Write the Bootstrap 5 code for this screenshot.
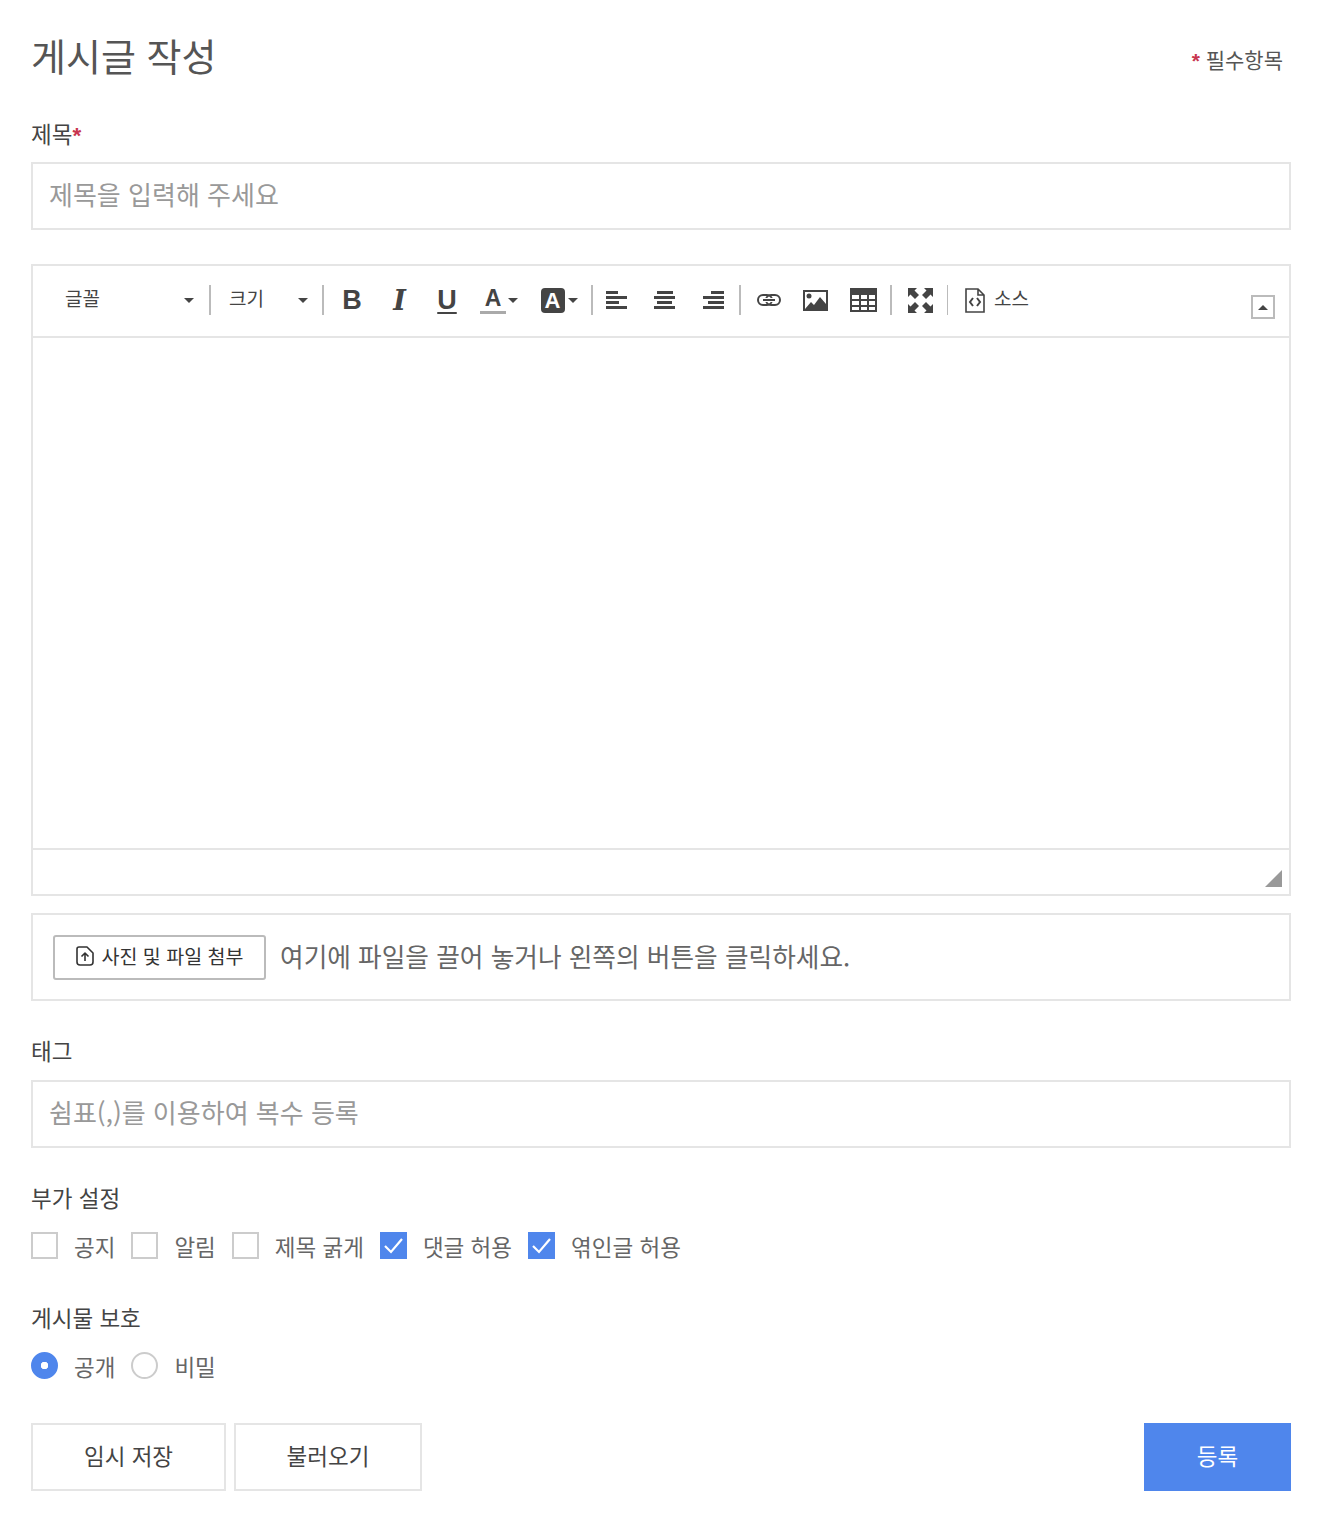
<!DOCTYPE html>
<html lang="ko">
<head>
<meta charset="utf-8">
<title>게시글 작성</title>
<link rel="stylesheet" href="https://cdn.jsdelivr.net/npm/bootstrap@5.3.0/dist/css/bootstrap.min.css">
<style>
body{font-family:"Noto Sans CJK KR","Liberation Sans",sans-serif;color:#555;background:#fff;}
.wb-page{padding:30px 35px 23px 31px;}
.wb-head{height:52px;}
.wb-title{font-size:38px;line-height:52px;font-weight:400;color:#555;margin:0 0 2px;}
.wb-req{font-size:21px;line-height:24px;color:#555;margin-right:8px;margin-top:5px;}
.wb-star{color:#c8364f;font-family:"Liberation Sans",sans-serif;font-weight:700;line-height:1;}
.wb-label{display:block;font-size:22.500px;line-height:32px;color:#444;margin:0 0 12px;}
.wb-label-first{margin-top:36px;line-height:30px;margin-bottom:14px;}
.wb-input.form-control{height:68px;border:2px solid #e5e5e5;border-radius:0;font-size:26px;padding:0 16px 5px;color:#555;box-shadow:none;}
.wb-input.form-control::placeholder{color:#999;}
.wb-editor{border:2px solid #e5e5e5;margin-top:34px;}
.wb-tools{height:72px;border-bottom:2px solid #e5e5e5;padding-top:19px;}
.wb-tool{height:30px;width:48px;flex:none;display:flex;align-items:center;justify-content:center;color:#444;}
.wb-tool svg{display:block;fill:#444;}
.wb-w46{width:46px;}
.wb-w47{width:47px;}
.wb-w49{width:49px;}
.wb-w50{width:50px;}
.wb-w54{width:54px;}
.wb-w56{width:56px;}
.wb-w64{width:64px;}
.wb-ml1{margin-left:1px;}
.wb-ml2{margin-left:2px;}
.wb-ml4{margin-left:4px;}
.wb-sep{flex:none;width:2px;height:30px;background:#bbb;}
.wb-sep-thin{width:1px;}
.wb-select{height:30px;flex:none;display:flex;align-items:center;font-size:19px;color:#444;padding-bottom:4px;}
.wb-select-a{width:176px;padding-left:32px;}
.wb-select-b{width:111px;padding-left:18px;}
.wb-caret{width:0;height:0;border-left:5px solid transparent;border-right:5px solid transparent;border-top:5px solid #444;flex:none;}
.wb-select .wb-caret{margin-top:4px;}
.wb-select-a .wb-caret{margin-left:auto;margin-right:15px;}
.wb-select-b .wb-caret{margin-left:auto;margin-right:14px;}
.wb-b,.wb-u{font-family:"Liberation Sans",sans-serif;font-weight:700;font-size:27px;line-height:1;}
.wb-i{font-family:"DejaVu Serif",serif;font-weight:700;font-style:italic;font-size:27px;line-height:1;}
.wb-u{text-decoration:underline;text-decoration-thickness:2px;text-underline-offset:3px;}
.wb-a{display:block;font-family:"Liberation Sans",sans-serif;font-weight:700;font-size:23px;border-bottom:3px solid #aaa;line-height:23px;height:27px;padding:0 5px;margin-right:2px;}
.wb-abox{width:24px;height:25px;background:#444;color:#fff;border-radius:4px;font-family:"Liberation Sans",sans-serif;font-weight:700;font-size:22px;line-height:25px;text-align:center;margin-right:3px;}
.wb-src{font-size:19px;color:#444;height:30px;margin-left:17px;flex:none;display:flex;align-items:center;gap:9px;}
.wb-src span{margin-bottom:4px;}
.wb-collapse{width:24px;height:24px;border:2px solid #bbb;margin:10px 14px 0 auto;flex:none;display:flex;align-items:center;justify-content:center;}
.wb-caret-up{width:0;height:0;border-left:5px solid transparent;border-right:5px solid transparent;border-bottom:5px solid #444;}
.wb-body{height:510px;}
.wb-status{height:46px;border-top:2px solid #e5e5e5;position:relative;}
.wb-grip{position:absolute;right:7px;bottom:7px;width:17px;height:17px;background:#999;clip-path:polygon(100% 0,100% 100%,0 100%);}
.wb-upload{height:88px;border:2px solid #e5e5e5;margin-top:17px;padding-left:20px;gap:14px;}
.wb-upload-btn.btn{width:213px;height:45px;border:2px solid #bbb;border-radius:3px;background:#fff;color:#333;font-size:19.500px;line-height:1;padding:0 0 2px;}
.wb-upload-btn svg{display:block;}
.wb-hint{font-size:25.700px;color:#666;margin:0 0 2px;}
.wb-label-tag{margin-top:33px;margin-bottom:14px;}
.wb-label-opt{margin-top:33px;margin-bottom:19px;}
.wb-label-prot{margin-top:42px;margin-bottom:19px;}
.wb-check.form-check{display:flex;align-items:center;padding:0;margin:0;min-height:27px;height:27px;}
.wb-check .form-check-input{float:none;width:27px;height:27px;margin:0 16px 0 0;border:2px solid #ccc;border-radius:0;box-shadow:none;flex:none;}
.wb-check .form-check-input[type=radio]{border-radius:50%;}
.wb-check .form-check-input:checked{background-color:#4f86ec;border-color:#4f86ec;}
.wb-check .form-check-input[type=checkbox]:checked{background-image:url("data:image/svg+xml,%3csvg xmlns='http://www.w3.org/2000/svg' viewBox='0 0 27 27'%3e%3cpath fill='none' stroke='%23fff' stroke-width='2.2' d='M5 14l6 6L22 7'/%3e%3c/svg%3e");background-size:27px 27px;}
.wb-check .form-check-input[type=radio]:checked{background-image:radial-gradient(circle,#fff 3.5px,transparent 4px);background-size:auto;}
.wb-check .form-check-label{font-size:22.500px;line-height:27px;color:#666;white-space:nowrap;padding-top:1px;}
.wb-opts{gap:16px;}
.wb-actions{margin-top:44px;gap:8px;}
.wb-btn.btn{height:68px;border:2px solid #e5e5e5;border-radius:0;background:#fff;color:#444;font-size:22.500px;padding:0 0 3px;}
.wb-btn-a.btn{width:195px;}
.wb-btn-b.btn{width:188px;}
.wb-btn-go.btn{width:147px;height:68px;border:0;border-radius:0;background:#4f86ec;color:#fff;font-size:22.500px;padding:0 0 3px;margin-left:auto;}
</style>
</head>
<body>
<form class="wb-page">
  <div class="wb-head d-flex justify-content-between align-items-center">
    <h1 class="wb-title">게시글 작성</h1>
    <div class="wb-req"><span class="wb-star">*</span> 필수항목</div>
  </div>

  <label class="wb-label wb-label-first" for="wbt">제목<span class="wb-star">*</span></label>
  <input id="wbt" class="form-control wb-input" type="text" placeholder="제목을 입력해 주세요">

  <div class="wb-editor">
    <div class="wb-tools d-flex align-items-start">
      <div class="wb-select wb-select-a"><span>글꼴</span><i class="wb-caret"></i></div>
      <div class="wb-sep"></div>
      <div class="wb-select wb-select-b"><span>크기</span><i class="wb-caret"></i></div>
      <div class="wb-sep"></div>
      <div class="wb-tool wb-ml4"><span class="wb-b">B</span></div>
      <div class="wb-tool wb-w47"><span class="wb-i">I</span></div>
      <div class="wb-tool"><span class="wb-u">U</span></div>
      <div class="wb-tool wb-w56"><span class="wb-a">A</span><i class="wb-caret"></i></div>
      <div class="wb-tool wb-w64"><span class="wb-abox">A</span><i class="wb-caret"></i></div>
      <div class="wb-sep"></div>
      <div class="wb-tool wb-w46 wb-ml1"><svg width="22" height="20" viewBox="0 0 22 20"><path d="M0 1h12v3H0zM0 6h21v3H0zM0 11h13v3H0zM0 16h21v3H0z"/></svg></div>
      <div class="wb-tool wb-w49"><svg width="22" height="20" viewBox="0 0 22 20"><path d="M3 1h16v3H3zM0 6h21v3H0zM3 11h15v3H3zM0 16h21v3H0z"/></svg></div>
      <div class="wb-tool wb-w50"><svg width="22" height="20" viewBox="0 0 22 20"><path d="M8 1h13v3H8zM0 6h21v3H0zM5 11h16v3H5zM0 16h21v3H0z"/></svg></div>
      <div class="wb-sep"></div>
      <div class="wb-tool wb-w47 wb-ml4"><svg width="24" height="12" viewBox="0 0 24 12"><rect x="1" y="1" width="14" height="10" rx="5" fill="none" stroke="#444" stroke-width="2"/><rect x="9" y="1" width="14" height="10" rx="5" fill="none" stroke="#444" stroke-width="2"/><path d="M5 4h14v4H5z" fill="#fff"/><path d="M6 5h12v2H6z"/></svg></div>
      <div class="wb-tool wb-w47"><svg width="25" height="21" viewBox="0 0 25 21"><path fill-rule="evenodd" d="M0 0h25v21H0zM2 2v17h21V2z"/><circle cx="6" cy="6" r="2.500"/><path d="M2 19l6-7 3 3 6-8 6 7v5z"/></svg></div>
      <div class="wb-tool wb-w49"><svg width="27" height="24" viewBox="0 0 27 24"><path fill-rule="evenodd" d="M0 0h27v24H0zM2 7v4h7V7zM11 7v4h6V7zM19 7v4h6V7zM2 13v4h7v-4zM11 13v4h6v-4zM19 13v4h6v-4zM2 19v3h7v-3zM11 19v3h6v-3zM19 19v3h6v-3z"/></svg></div>
      <div class="wb-sep wb-ml2"></div>
      <div class="wb-tool wb-w54 wb-ml1"><svg width="25" height="25" viewBox="0 0 25 25"><path d="M0 0h9L6.500 2.500 11 7 7 11 2.500 6.500 0 9zM25 0v9l-2.500-2.500L18 11l-4-4 4.500-4.500L16 0zM0 25v-9l2.500 2.500L7 14l4 4-4.500 4.500L9 25zM25 25h-9l2.500-2.500L14 18l4-4 4.500 4.500L25 16z"/></svg></div>
      <div class="wb-sep wb-sep-thin"></div>
      <div class="wb-src"><svg width="20" height="25" viewBox="0 0 20 25"><path fill="none" stroke="#444" stroke-width="1.600" d="M1 1h12l6 6v17H1zM13 1v6h6"/><path fill="none" stroke="#444" stroke-width="2" d="M8 10l-3 4 3 4M12 10l3 4-3 4"/></svg><span>소스</span></div>
      <div class="wb-collapse"><i class="wb-caret-up"></i></div>
    </div>
    <div class="wb-body"></div>
    <div class="wb-status"><div class="wb-grip"></div></div>
  </div>

  <div class="wb-upload d-flex align-items-center">
    <button type="button" class="btn wb-upload-btn d-flex align-items-center justify-content-center gap-2">
      <svg width="18" height="20" viewBox="0 0 18 20"><path fill="none" stroke="#333" stroke-width="1.600" stroke-linejoin="round" d="M3 1h8l6 6v9a3 3 0 0 1-3 3H4a3 3 0 0 1-3-3V3a2 2 0 0 1 2-2zM9 15V7M5.500 10.500L9 7l3.500 3.500"/></svg>
      <span>사진 및 파일 첨부</span>
    </button>
    <p class="wb-hint">여기에 파일을 끌어 놓거나 왼쪽의 버튼을 클릭하세요.</p>
  </div>

  <label class="wb-label wb-label-tag" for="wbg">태그</label>
  <input id="wbg" class="form-control wb-input" type="text" placeholder="쉼표(,)를 이용하여 복수 등록">

  <div class="wb-label wb-label-opt">부가 설정</div>
  <div class="d-flex wb-opts">
    <div class="form-check wb-check"><input class="form-check-input" type="checkbox" id="c1"><label class="form-check-label" for="c1">공지</label></div>
    <div class="form-check wb-check"><input class="form-check-input" type="checkbox" id="c2"><label class="form-check-label" for="c2">알림</label></div>
    <div class="form-check wb-check"><input class="form-check-input" type="checkbox" id="c3"><label class="form-check-label" for="c3">제목 굵게</label></div>
    <div class="form-check wb-check"><input class="form-check-input" type="checkbox" id="c4" checked><label class="form-check-label" for="c4">댓글 허용</label></div>
    <div class="form-check wb-check"><input class="form-check-input" type="checkbox" id="c5" checked><label class="form-check-label" for="c5">엮인글 허용</label></div>
  </div>

  <div class="wb-label wb-label-prot">게시물 보호</div>
  <div class="d-flex wb-opts">
    <div class="form-check wb-check"><input class="form-check-input" type="radio" name="p" id="r1" checked><label class="form-check-label" for="r1">공개</label></div>
    <div class="form-check wb-check"><input class="form-check-input" type="radio" name="p" id="r2"><label class="form-check-label" for="r2">비밀</label></div>
  </div>

  <div class="d-flex wb-actions">
    <button type="button" class="btn wb-btn wb-btn-a">임시 저장</button>
    <button type="button" class="btn wb-btn wb-btn-b">불러오기</button>
    <button type="button" class="btn wb-btn-go">등록</button>
  </div>
</form>
<script src="https://cdn.jsdelivr.net/npm/bootstrap@5.3.0/dist/js/bootstrap.bundle.min.js"></script>
</body>
</html>
